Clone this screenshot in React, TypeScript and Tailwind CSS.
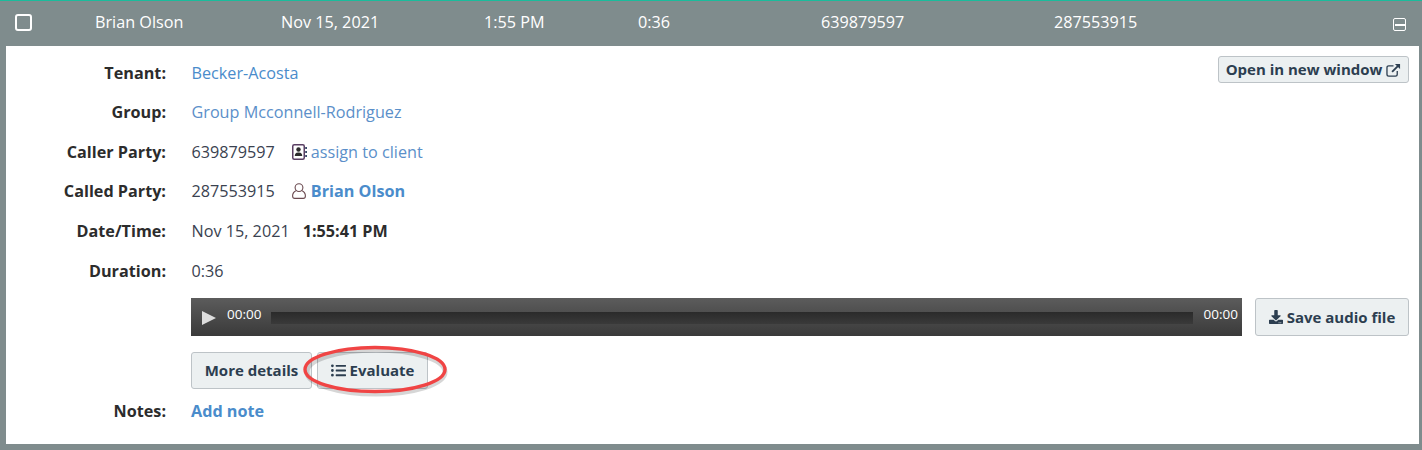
import { FaDownload, FaListUl } from 'react-icons/fa';

function Row({ label, className, children }: { label: string; className: string; children: React.ReactNode }) {
  return (
    <div className={`flex items-center ${className}`}>
      <div className="w-[160px] text-right font-bold text-[#2c2c2c]">{label}</div>
      <div className="ml-[25.5px] flex items-center text-[#3a4250]">{children}</div>
    </div>
  );
}

function Button({ children, className }: { children: React.ReactNode; className: string }) {
  return (
    <div className={`flex items-center justify-center bg-[#ecf0f1] border border-[#bdc3c7] rounded-[3px] font-bold text-[15px] text-[#2c3e50] ${className}`}>
      {children}
    </div>
  );
}

function AddressIcon() {
  return (
    <svg viewBox="0 0 15 16" className="ml-[17px] w-[15px] h-[16px]">
      <rect x="0.75" y="0.75" width="11.5" height="14.5" rx="1.5" fill="none" stroke="#5a3f63" strokeWidth="1.5" />
      <circle cx="6.5" cy="5.5" r="2.2" fill="#2c2c2c" />
      <path d="M2.8 12 C2.8 9 4.5 8.4 6.5 8.4 C8.5 8.4 10.2 9 10.2 12 Z" fill="#2c2c2c" />
      <path d="M13.2 3 H15 V5 H13.2 Z M13.2 7 H15 V9 H13.2 Z M13.2 11 H15 V13 H13.2 Z" fill="#3a4a6a" />
    </svg>
  );
}

function UserIcon() {
  return (
    <svg viewBox="0 0 14 16" className="ml-[17px] w-[14px] h-[16px]" fill="none" stroke="#6b4a50" strokeWidth="1.1">
      <circle cx="7" cy="4.6" r="3.9" />
      <path d="M4 7.8 C1.8 8.8 0.6 10.4 0.6 13 C0.6 14.6 1.4 15.4 2.8 15.4 H11.2 C12.6 15.4 13.4 14.6 13.4 13 C13.4 10.4 12.2 8.8 10 7.8" />
    </svg>
  );
}

function OpenIcon() {
  return (
    <svg viewBox="0 0 16 15" className="ml-[4px] w-[15px] h-[14px]" fill="none" stroke="#2c3e50">
      <path d="M8 3 H3 C1.8 3 1 3.8 1 5 V12 C1 13.2 1.8 14 3 14 H10 C11.2 14 12 13.2 12 12 V8.5" strokeWidth="1.4" />
      <path d="M6.5 9.5 L14 2" strokeWidth="2" />
      <path d="M9.5 1 H15 V6.5 Z" fill="#2c3e50" stroke="none" />
    </svg>
  );
}

export default function App() {
  return (
    <div className="w-[1422px] h-[450px] overflow-hidden bg-[#7f8c8d] border-t border-[#1abc9c] font-['Open_Sans',sans-serif] text-[16.2px]">
      {/* call row */}
      <div className="relative flex items-center h-[45px] text-white">
        <div className="ml-[15px] w-[17px] h-[17px] border-2 border-white rounded-[3px] mb-[3px]" />
        <div className="ml-[63px] w-[186px] mb-[2px]">Brian Olson</div>
        <div className="w-[203px] mb-[2px]">Nov 15, 2021</div>
        <div className="w-[154px] mb-[2px]">1:55 PM</div>
        <div className="w-[183px] mb-[2px]">0:36</div>
        <div className="w-[233px] mb-[2px]">639879597</div>
        <div className="mb-[2px]">287553915</div>
        <div className="absolute right-[16px] top-[17px] flex items-center justify-center w-[13px] h-[13px] border border-white rounded-[2px]">
          <div className="w-[10px] h-[2px] bg-white" />
        </div>
      </div>

      {/* details panel */}
      <div className="relative ml-[6px] mr-[3px] h-[398px] bg-white pt-[7px]">
        <Row label="Tenant:" className="h-[40px]">
          <span className="text-[#4a8ccb]">Becker-Acosta</span>
        </Row>
        <Row label="Group:" className="h-[39px]">
          <span className="text-[#5b8fc9]">Group Mcconnell-Rodriguez</span>
        </Row>
        <Row label="Caller Party:" className="h-[40px]">
          <span>639879597</span>
          <AddressIcon />
          <span className="ml-[4px] text-[#5b8fc9]">assign to client</span>
        </Row>
        <Row label="Called Party:" className="h-[39px]">
          <span>287553915</span>
          <UserIcon />
          <span className="ml-[5px] font-bold text-[#4a8ccb]">Brian Olson</span>
        </Row>
        <Row label="Date/Time:" className="h-[40px]">
          <span>Nov 15, 2021</span>
          <span className="ml-[13px] font-bold text-[#2c2c2c]">1:55:41 PM</span>
        </Row>
        <Row label="Duration:" className="h-[40px]">
          <span>0:36</span>
        </Row>

        {/* audio player */}
        <div className="flex ml-[185px] mt-[7px]">
          <div className="flex items-center w-[1051px] h-[38px] bg-gradient-to-b from-[#5c5c5c] to-[#3a3a3a] text-white text-[13.5px]">
            <svg viewBox="0 0 15 15" className="ml-[11px] mt-[2px] w-[14px] h-[14px]">
              <path d="M0 0 L15 7.5 L0 15 Z" fill="#dcdcdc" />
            </svg>
            <span className="ml-[11px] mb-[6px]">00:00</span>
            <div className="ml-[10px] flex-1 h-[12px] mt-[1px] bg-gradient-to-b from-[#2a2a2a] to-[#3a3a3a]" />
            <span className="ml-[11px] mr-[4px] mb-[6px]">00:00</span>
          </div>
          <Button className="ml-[13px] w-[154px] h-[38px]">
            <FaDownload className="w-[14px] h-[14px] mr-[4px]" />
            Save audio file
          </Button>
        </div>

        <div className="flex ml-[185px] mt-[16px]">
          <Button className="w-[121px] h-[37px]">More details</Button>
          <Button className="ml-[5px] w-[111px] h-[37px]">
            <FaListUl className="w-[15px] h-[15px] mr-[4px]" />
            Evaluate
          </Button>
        </div>

        <Row label="Notes:" className="h-[40px] mt-[2px]">
          <span className="-ml-[0.5px] font-bold text-[#4a8ccb]">Add note</span>
        </Row>

        <Button className="absolute right-[10px] top-[10px] w-[191px] h-[27px]">
          Open in new window
          <OpenIcon />
        </Button>

        {/* red annotation */}
        <svg className="absolute left-[296px] top-[299px]" width="148" height="52" viewBox="0 0 148 52">
          <ellipse cx="74" cy="27" rx="69" ry="22" fill="none" stroke="#000" strokeOpacity="0.16" strokeWidth="5" />
          <ellipse cx="73" cy="24.5" rx="70" ry="22" fill="none" stroke="#f04444" strokeWidth="3.4" />
        </svg>
      </div>
    </div>
  );
}
